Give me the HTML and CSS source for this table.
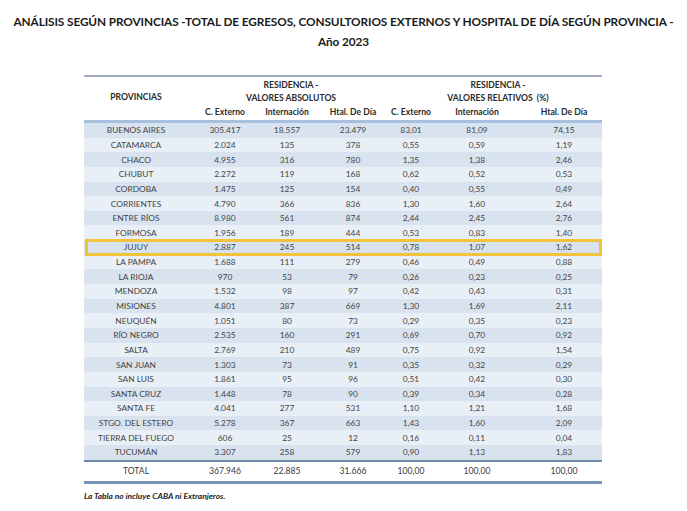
FILE: index.html
```html
<!DOCTYPE html>
<html lang="es">
<head>
<meta charset="utf-8">
<title>Análisis según provincias</title>
<link rel="stylesheet" href="styles.css">
</head>
<body>
<h1 class="title">ANÁLISIS SEGÚN PROVINCIAS -TOTAL DE EGRESOS, CONSULTORIOS EXTERNOS Y HOSPITAL DE DÍA SEGÚN PROVINCIA -<br>Año 2023</h1>
<div class="table">
  <div class="head">
    <div class="hc prov">PROVINCIAS</div>
    <div class="hc grp g1"><span>RESIDENCIA -</span><span>VALORES ABSOLUTOS</span></div>
    <div class="hc grp g2"><span>RESIDENCIA -</span><span>VALORES RELATIVOS&nbsp; (%)</span></div>
    <div class="hc sub">C. Externo</div>
    <div class="hc sub">Internación</div>
    <div class="hc sub">Htal. De Día</div>
    <div class="hc sub">C. Externo</div>
    <div class="hc sub">Internación</div>
    <div class="hc sub">Htal. De Día</div>
  </div>
  <div class="body">
    <div class="row"><span>BUENOS AIRES</span><span>305.417</span><span>18.557</span><span>23.479</span><span>83,01</span><span>81,09</span><span>74,15</span></div>
    <div class="row"><span>CATAMARCA</span><span>2.024</span><span>135</span><span>378</span><span>0,55</span><span>0,59</span><span>1,19</span></div>
    <div class="row"><span>CHACO</span><span>4.955</span><span>316</span><span>780</span><span>1,35</span><span>1,38</span><span>2,46</span></div>
    <div class="row"><span>CHUBUT</span><span>2.272</span><span>119</span><span>168</span><span>0,62</span><span>0,52</span><span>0,53</span></div>
    <div class="row"><span>CORDOBA</span><span>1.475</span><span>125</span><span>154</span><span>0,40</span><span>0,55</span><span>0,49</span></div>
    <div class="row"><span>CORRIENTES</span><span>4.790</span><span>366</span><span>836</span><span>1,30</span><span>1,60</span><span>2,64</span></div>
    <div class="row"><span>ENTRE RÍOS</span><span>8.980</span><span>561</span><span>874</span><span>2,44</span><span>2,45</span><span>2,76</span></div>
    <div class="row"><span>FORMOSA</span><span>1.956</span><span>189</span><span>444</span><span>0,53</span><span>0,83</span><span>1,40</span></div>
    <div class="row"><span>JUJUY</span><span>2.887</span><span>245</span><span>514</span><span>0,78</span><span>1,07</span><span>1,62</span></div>
    <div class="row"><span>LA PAMPA</span><span>1.688</span><span>111</span><span>279</span><span>0,46</span><span>0,49</span><span>0,88</span></div>
    <div class="row"><span>LA RIOJA</span><span>970</span><span>53</span><span>79</span><span>0,26</span><span>0,23</span><span>0,25</span></div>
    <div class="row"><span>MENDOZA</span><span>1.532</span><span>98</span><span>97</span><span>0,42</span><span>0,43</span><span>0,31</span></div>
    <div class="row"><span>MISIONES</span><span>4.801</span><span>387</span><span>669</span><span>1,30</span><span>1,69</span><span>2,11</span></div>
    <div class="row"><span>NEUQUÉN</span><span>1.051</span><span>80</span><span>73</span><span>0,29</span><span>0,35</span><span>0,23</span></div>
    <div class="row"><span>RÍO NEGRO</span><span>2.535</span><span>160</span><span>291</span><span>0,69</span><span>0,70</span><span>0,92</span></div>
    <div class="row"><span>SALTA</span><span>2.769</span><span>210</span><span>489</span><span>0,75</span><span>0,92</span><span>1,54</span></div>
    <div class="row"><span>SAN JUAN</span><span>1.303</span><span>73</span><span>91</span><span>0,35</span><span>0,32</span><span>0,29</span></div>
    <div class="row"><span>SAN LUIS</span><span>1.861</span><span>95</span><span>96</span><span>0,51</span><span>0,42</span><span>0,30</span></div>
    <div class="row"><span>SANTA CRUZ</span><span>1.448</span><span>78</span><span>90</span><span>0,39</span><span>0,34</span><span>0,28</span></div>
    <div class="row"><span>SANTA FE</span><span>4.041</span><span>277</span><span>531</span><span>1,10</span><span>1,21</span><span>1,68</span></div>
    <div class="row"><span>STGO. DEL ESTERO</span><span>5.278</span><span>367</span><span>663</span><span>1,43</span><span>1,60</span><span>2,09</span></div>
    <div class="row"><span>TIERRA DEL FUEGO</span><span>606</span><span>25</span><span>12</span><span>0,16</span><span>0,11</span><span>0,04</span></div>
    <div class="row"><span>TUCUMÁN</span><span>3.307</span><span>258</span><span>579</span><span>0,90</span><span>1,13</span><span>1,83</span></div>
    <div class="highlight"></div>
  </div>
  <div class="row total"><span>TOTAL</span><span>367.946</span><span>22.885</span><span>31.666</span><span>100,00</span><span>100,00</span><span>100,00</span></div>
</div>
<p class="note">La Tabla no incluye CABA ni Extranjeros.</p>
</body>
</html>
```

FILE: styles.css
```css
html, body {
  margin: 0;
  padding: 0;
  background: #ffffff;
}

body {
  font-family: Lato, "Open Sans", sans-serif;
  color: #333;
}

.title {
  margin: 0;
  padding-top: 12px;
  font-family: Lato, sans-serif;
  font-weight: 700;
  font-size: 11.8px;
  line-height: 20px;
  text-align: center;
  color: #1a1a1a;
  letter-spacing: -0.1px;
}

.table {
  margin: 23px 0 0 84px;
  width: 518px;
  border-top: 2px solid #a4adbb;
}

.head,
.row {
  display: grid;
  grid-template-columns: 104px 74px 50px 82px 34px 98px 76px;
}

.head {
  grid-template-rows: 29px 14px;
  border-bottom: 3px solid #a7c0de;
  font-weight: 700;
  font-size: 8.6px;
  color: #2b2b2b;
}

.hc {
  display: flex;
  justify-content: center;
  align-items: center;
  white-space: nowrap;
}

.prov {
  grid-row: 1 / span 2;
  grid-column: 1;
  padding-bottom: 3px;
}

.grp {
  flex-direction: column;
  justify-content: flex-end;
  line-height: 13px;
  padding-bottom: 1px;
}

.g1 { grid-column: 2 / span 3; grid-row: 1; }
.g2 { grid-column: 5 / span 3; grid-row: 1; }

.sub {
  grid-row: 2;
  align-items: flex-start;
  line-height: 12px;
}

.body {
  position: relative;
  border-bottom: 2px solid #6f88a8;
}

.row {
  height: 14.65px;
  font-size: 8.4px;
  color: #444;
}

.body .row:nth-child(odd) { background: #d9e3f0; }
.body .row:nth-child(even) { background: #e9eff7; }

.row span {
  display: flex;
  justify-content: center;
  align-items: center;
  white-space: nowrap;
}

.row.total {
  height: 19px;
  background: #ffffff;
  font-size: 8.6px;
  color: #3a3a3a;
  border-bottom: 3px solid #7894b8;
}

.highlight {
  position: absolute;
  left: 1px;
  right: 0;
  top: 116px;
  height: 17px;
  border: 3px solid #f2c23c;
  box-sizing: border-box;
}

.note {
  margin: 7px 0 0 84px;
  font-size: 8.4px;
  font-weight: 700;
  font-style: italic;
  color: #222;
}
```
